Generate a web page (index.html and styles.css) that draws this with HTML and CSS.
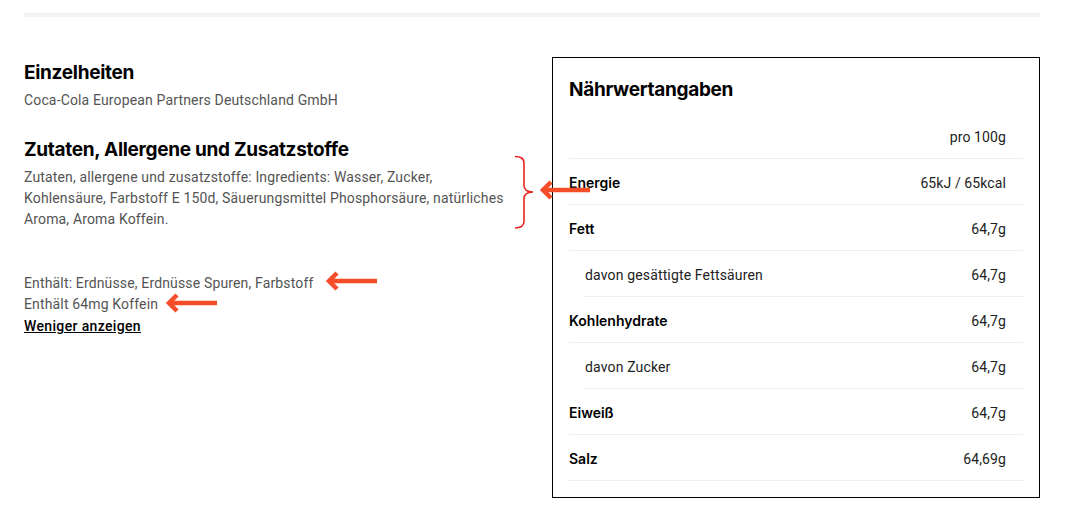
FILE: index.html
```html
<!DOCTYPE html>
<html lang="de">

<head>
    <meta charset="UTF-8">
    <meta name="viewport" content="width=device-width, initial-scale=1.0">
    <title>Einzelheiten - Coca-Cola</title>
    <link rel="stylesheet" href="styles.css">
</head>

<body>
    <div class="sheet">
        <div class="divider"></div>

        <div class="content">
            <div class="details">
                <h2>Einzelheiten</h2>
                <p class="text">Coca-Cola European Partners Deutschland GmbH</p>

                <h2 class="section">Zutaten, Allergene und Zusatzstoffe</h2>
                <p class="text">Zutaten, allergene und zusatzstoffe: Ingredients: Wasser, Zucker, Kohlensäure, Farbstoff E 150d, Säuerungsmittel Phosphorsäure, natürliches Aroma, Aroma Koffein.</p>

                <div class="contains">
                    <p class="text">Enthält: Erdnüsse, Erdnüsse Spuren, Farbstoff</p>
                    <p class="text">Enthält 64mg Koffein</p>
                    <a href="#" class="less">Weniger anzeigen</a>
                </div>
            </div>

            <div class="card">
                <h3>Nährwertangaben</h3>
                <div class="row head">
                    <span></span>
                    <span class="value">pro 100g</span>
                </div>
                <div class="row">
                    <span class="label">Energie</span>
                    <span class="value">65kJ / 65kcal</span>
                </div>
                <div class="row">
                    <span class="label">Fett</span>
                    <span class="value">64,7g</span>
                </div>
                <div class="row sub">
                    <span class="label">davon gesättigte Fettsäuren</span>
                    <span class="value">64,7g</span>
                </div>
                <div class="row">
                    <span class="label">Kohlenhydrate</span>
                    <span class="value">64,7g</span>
                </div>
                <div class="row sub">
                    <span class="label">davon Zucker</span>
                    <span class="value">64,7g</span>
                </div>
                <div class="row">
                    <span class="label">Eiweiß</span>
                    <span class="value">64,7g</span>
                </div>
                <div class="row">
                    <span class="label">Salz</span>
                    <span class="value">64,69g</span>
                </div>
            </div>
        </div>

        <!-- annotation marks drawn over the page -->
        <svg class="marks" width="1070" height="523" viewBox="0 0 1070 523">
            <path class="brace" d="M515,156.5 C521,156.5 524,158 524,164 L524,185 C524,190 527,192 533,192 C527,192 524,194 524,199 L524,221 C524,226 521,228 515,228" />
            <g class="arrow">
                <path d="M590,190 L545,190" />
                <path d="M551,182 L543,190 L551,198" />
            </g>
            <g class="arrow">
                <path d="M377,281 L331,281" />
                <path d="M337,273 L329,281 L337,289" />
            </g>
            <g class="arrow">
                <path d="M217,303 L171,303" />
                <path d="M177,295 L169,303 L177,311" />
            </g>
        </svg>
    </div>
</body>

</html>
```

FILE: styles.css
```css
body {
    margin: 0;
    font-family: Roboto, "Noto Sans", sans-serif;
    color: #000;
    background-color: #fff;
}

.sheet {
    position: relative;
    padding: 13px 30px 0 24px;
}

.divider {
    height: 4px;
    background-color: #f3f3f3;
}

.content {
    display: grid;
    grid-template-columns: 488px 488px;
    justify-content: space-between;
    margin-top: 40px;
}

h2,
h3 {
    font-family: Inter, "Noto Sans", sans-serif;
    font-size: 19px;
    font-weight: 700;
    letter-spacing: -0.3px;
    margin: 0;
}

h2 {
    line-height: 28px;
    padding-top: 2px;
}

h2.section {
    margin-top: 23px;
}

.text {
    font-size: 14px;
    line-height: 21px;
    letter-spacing: 0.15px;
    color: #545454;
    margin: 3px 0 0;
}

.contains {
    margin-top: 43px;
}

.contains .text {
    margin: 0;
}

.less {
    display: inline-block;
    font-size: 14px;
    line-height: 22px;
    font-weight: 500;
    letter-spacing: 0.35px;
    color: #000;
    text-decoration: underline;
}

.card {
    border: 1px solid #000;
    padding: 17px 16px 16px;
}

h3 {
    line-height: 30px;
    margin-bottom: 8px;
}

.row {
    display: flex;
    justify-content: space-between;
    align-items: center;
    height: 46px;
    box-sizing: border-box;
    padding: 2px 17px 0 0;
    border-bottom: 1px solid #eeeeee;
    font-size: 14px;
}

.row.sub {
    margin-left: 16px;
}

.label {
    font-family: Inter, "Noto Sans", sans-serif;
    font-weight: 600;
}

.row.sub .label {
    font-family: Roboto, "Noto Sans", sans-serif;
    font-weight: 400;
    letter-spacing: 0.15px;
    color: #222;
}

.value {
    color: #222;
    letter-spacing: 0.1px;
}

.marks {
    position: absolute;
    top: 0;
    left: 0;
    pointer-events: none;
}

.brace {
    fill: none;
    stroke: #e8231c;
    stroke-width: 1.6;
}

.arrow path {
    fill: none;
    stroke: #f44d27;
    stroke-width: 4.5;
}
```
